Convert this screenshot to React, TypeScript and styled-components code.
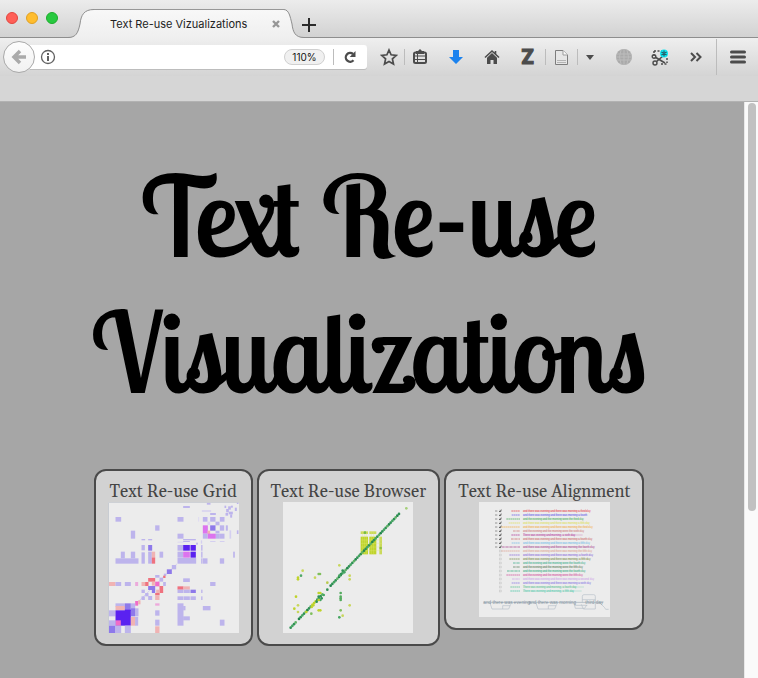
import React from "react";
import styled, { createGlobalStyle } from "styled-components";

const GlobalStyle = createGlobalStyle`
  * { box-sizing: border-box; }
  body { margin: 0; background: #a6a6a6; }
  button { border: 0; padding: 0; margin: 0; background: none; font: inherit; color: inherit; cursor: pointer; }
`;

const ui = `Inter, "Liberation Sans", sans-serif`;

const Window = styled.div`
  display: flex;
  flex-direction: column;
  min-height: 100vh;
  font-family: ${ui};
`;

const TabBar = styled.header`
  display: flex;
  align-items: flex-end;
  height: 38px;
  background: linear-gradient(#ececec, #d2d2d2);
  border-bottom: 1px solid #8e8e8e;
`;

const Lights = styled.div`
  display: flex;
  gap: 8px;
  width: 68px;
  padding: 0 0 13px 6px;
`;

const Light = styled.button<{ $fill: string; $edge: string }>`
  width: 12px;
  height: 12px;
  border-radius: 50%;
  background: ${(p) => p.$fill};
  border: 1px solid ${(p) => p.$edge};
`;

const Tab = styled.div`
  display: flex;
  height: 29px;
  margin-bottom: -1px;
  svg { display: block; }
`;

const TabBody = styled.div`
  display: flex;
  align-items: center;
  justify-content: space-between;
  width: 190px;
  padding: 0 3px 0 16px;
  font-size: 11px;
  color: #222;
  white-space: nowrap;
  background: linear-gradient(#f8f8f8, #efefef);
  border-top: 1px solid #979797;
`;

const NewTab = styled.button`
  width: 14px;
  height: 14px;
  margin: 0 0 5px -4px;
  z-index: 1;
  svg { display: block; }
`;

const Toolbar = styled.nav`
  display: flex;
  align-items: center;
  height: 38px;
  background: linear-gradient(#efefef, #d4d4d4);
`;

const Back = styled.button`
  display: grid;
  place-items: center;
  width: 32px;
  height: 32px;
  margin-left: 3px;
  border-radius: 50%;
  border: 1px solid #a9a9a9;
  background: linear-gradient(#fdfdfd, #f1f1f1);
  z-index: 1;
`;

const AddressBar = styled.div`
  display: flex;
  align-items: center;
  flex: 1;
  min-width: 0;
  height: 24px;
  margin-left: -5px;
  padding: 0 8px 0 10px;
  background: #fff;
  border-radius: 0 3px 3px 0;
  box-shadow: 0 1px 0 #bdbdbd;
`;

const Address = styled.input`
  flex: 1;
  min-width: 0;
  margin: 0 6px;
  border: 0;
  outline: 0;
  background: none;
  font: 12px ${ui};
`;

const Zoom = styled.button`
  width: 41px;
  height: 16px;
  border: 1px solid #d0d0d0;
  border-radius: 8px;
  background: #f0f0f0;
  font-size: 10px;
  line-height: 14px;
  color: #111;
`;

const Divider = styled.span<{ $tall?: boolean }>`
  flex: none;
  width: 1px;
  height: ${(p) => (p.$tall ? "36px" : "16px")};
  background: #bcbcbc;
`;

const AddressDivider = styled(Divider)`
  margin: 0 7px 0 8px;
`;

const ToolButton = styled.button<{ $width?: number; $gap?: number }>`
  display: grid;
  place-items: center;
  flex: none;
  width: ${(p) => p.$width ?? 36}px;
  height: 32px;
  margin-left: ${(p) => p.$gap ?? 0}px;
  color: #4c4c4c;
  svg { display: block; }
`;

const MenuDivider = styled(Divider)`
  margin-left: 2px;
`;

const ZMark = styled.span`
  font: 900 20px/20px Roboto, "Liberation Sans", sans-serif;
  -webkit-text-stroke: 1px #4c4c4c;
`;

const BookmarkStrip = styled.div`
  height: 26px;
  background: #d6d6d6;
  border-bottom: 1px solid #b2b2b2;
`;

const Viewport = styled.div`
  display: flex;
  flex: 1;
`;

const Page = styled.main`
  flex: 1;
  min-width: 0;
  padding: 46px 22px 32px 16px;
  background: #a6a6a6;
`;

const Title = styled.h1`
  margin: 0 0 49px;
  font: normal 108px/136px "Lobster Two", Lobster, "Liberation Serif", serif;
  -webkit-text-stroke: 2px #000;
  text-align: center;
  color: #000;
`;

const Cards = styled.div`
  display: flex;
  flex-wrap: wrap;
  align-items: flex-start;
  justify-content: center;
  gap: 4px;
`;

const Card = styled.a`
  display: flex;
  flex-direction: column;
  align-items: center;
  padding: 11px 12px;
  border: 2px solid #4a4a4a;
  border-radius: 12px;
  background: #d2d2d2;
  color: #444;
  text-decoration: none;
  font: 17px/20px Georgia, Gelasio, "Liberation Serif", serif;
  svg { display: block; background: #ececec; }
`;

const Scrollbar = styled.div`
  display: flex;
  flex-direction: column;
  width: 14px;
  padding: 1px 2px 0 3px;
  background: #fafafa;
  border-left: 1px solid #e8e8e8;
`;

const Thumb = styled.div`
  flex: 71;
  border-radius: 4px;
  background: #c1c1c1;
`;

const Track = styled.div`
  flex: 29;
`;

const TabEdge = ({ right }: { right?: boolean }) => (
  <svg width={right ? 22 : 26} height="29" viewBox={right ? "0 0 22 29" : "0 0 26 29"} aria-hidden="true">
    <defs>
      <linearGradient id="tabfill" x1="0" y1="0" x2="0" y2="1">
        <stop stopColor="#f8f8f8" />
        <stop offset="1" stopColor="#efefef" />
      </linearGradient>
    </defs>
    {right ? (
      <>
        <path d="M0 .5C5 1 6 7 8 15C9 23 11 28.500 20 28.500L22 29H0Z" fill="url(#tabfill)" />
        <path d="M0 .5C5 1 6 7 8 15C9 23 11 28.500 20 28.500H22" fill="none" stroke="#8e8e8e" />
      </>
    ) : (
      <>
        <path d="M0 29C8 28.500 10 24 12 15C13 6 16 .5 26 .5V29Z" fill="url(#tabfill)" />
        <path d="M0 28.500C8 28.500 10 24 12 15C13 6 16 .5 26 .5" fill="none" stroke="#8e8e8e" />
      </>
    )}
  </svg>
);

const L = "#bdb4ec", M = "#8e79ea", D = "#5a22f0", R = "#ef727f", P = "#f0b3b3", G = "#dc74ee", H = "#f06cc8";

type Cell = [number, number, number, number, string];
const gridCells: Cell[] = [
  [348, 113, 11, 6, L], [277, 123, 20, 6, L], [401, 122, 5, 7, L], [412, 124, 8, 10, L], [420, 122, 6, 6, L], [432, 128, 6, 10, L],
  [333, 136, 28, 4, "#d3cdef"], [406, 132, 8, 10, L], [404, 144, 8, 8, L], [414, 140, 12, 8, L], [418, 148, 6, 10, L], [358, 144, 17, 6, L], [438, 112, 5, 5, L],
  [74, 156, 17, 14, L], [260, 156, 18, 14, L], [336, 156, 14, 14, L], [358, 156, 16, 14, L], [387, 156, 14, 14, L], [322, 156, 3, 14, "#dedaf2"],
  [374, 170, 12, 11, L], [193, 181, 13, 16, L], [350, 170, 8, 10, "#dcd6f0"],
  [336, 181, 15, 25, G], [358, 181, 16, 16, M], [387, 181, 13, 16, L], [405, 181, 6, 16, L], [350, 197, 8, 10, P], [374, 197, 12, 8, L],
  [350, 206, 25, 15, G], [336, 206, 14, 15, L], [375, 206, 12, 15, L], [387, 206, 14, 15, L], [416, 196, 5, 25, "#d4cff0"], [438, 196, 5, 11, L], [260, 206, 18, 15, L],
  [120, 197, 13, 24, L], [152, 222, 11, 4, L], [172, 222, 12, 4, L], [277, 222, 38, 4, L], [260, 230, 18, 3, "#ddd8f1"], [277, 228, 20, 3, L], [358, 228, 16, 3, "#d4cff0"], [387, 228, 14, 3, "#d4cff0"],
  [316, 233, 5, 6, L], [330, 226, 4, 10, "#d4cff0"],
  [152, 240, 10, 16, L], [172, 240, 12, 17, M], [260, 240, 17, 17, L], [277, 240, 20, 17, D], [299, 240, 16, 17, D], [331, 240, 4, 17, L],
  [90, 260, 12, 20, L], [120, 260, 13, 20, L], [152, 262, 10, 34, L], [172, 260, 11, 36, L], [183, 260, 10, 20, P], [183, 278, 10, 18, R], [206, 260, 11, 18, L],
  [260, 260, 17, 18, L], [277, 260, 20, 18, G], [299, 260, 16, 18, D], [331, 260, 4, 18, L], [427, 260, 5, 18, L],
  [74, 280, 69, 16, L], [260, 279, 56, 17, L], [331, 280, 4, 16, L], [336, 280, 14, 16, L], [387, 280, 13, 16, L],
  [243, 300, 13, 13, L], [228, 313, 15, 14, M], [219, 326, 7, 7, L], [217, 332, 7, 7, R], [193, 330, 13, 8, L], [206, 338, 11, 12, L],
  [172, 339, 21, 11, R], [277, 340, 20, 11, L], [358, 351, 16, 12, L], [52, 351, 22, 12, P], [74, 351, 17, 12, L], [102, 351, 18, 12, L], [133, 351, 9, 12, "#ecaadb"],
  [152, 351, 11, 12, P], [163, 351, 10, 12, R], [193, 350, 13, 14, H], [183, 351, 9, 11, P], [217, 351, 8, 12, L],
  [172, 363, 21, 12, M], [183, 374, 10, 10, M], [206, 363, 11, 21, R], [196, 374, 10, 16, P], [260, 364, 18, 10, R], [278, 364, 19, 10, P],
  [152, 374, 10, 10, L], [163, 384, 10, 10, L], [193, 384, 13, 7, R], [193, 391, 13, 14, P], [172, 393, 12, 12, L], [152, 394, 10, 11, L],
  [260, 374, 17, 10, L], [278, 374, 19, 10, L], [299, 374, 16, 10, M], [331, 374, 4, 10, L], [260, 394, 17, 11, L], [278, 394, 19, 11, L], [299, 394, 16, 11, L], [331, 394, 4, 11, L],
  [133, 408, 9, 14, H], [142, 406, 7, 12, P], [193, 415, 13, 7, "#eda9dc"],
  [74, 415, 28, 10, L], [74, 423, 28, 13, P], [102, 415, 18, 20, M], [120, 415, 13, 20, L], [133, 430, 10, 24, L], [120, 430, 13, 24, M],
  [52, 436, 22, 18, L], [74, 436, 46, 46, D], [102, 434, 18, 4, D], [120, 456, 14, 26, P], [133, 456, 9, 26, L], [74, 466, 16, 16, H], [52, 466, 22, 16, L],
  [52, 482, 22, 22, M], [74, 482, 17, 22, L], [102, 482, 18, 22, L], [193, 436, 13, 16, L], [193, 464, 13, 18, L], [193, 484, 13, 20, P],
  [260, 415, 18, 67, L], [277, 423, 7, 13, L], [277, 454, 20, 12, L], [336, 423, 23, 13, L], [387, 464, 14, 18, L],
];

const GridChart = () => (
  <svg width="131" height="131" viewBox="52 111 392 393" role="img" aria-label="Text re-use grid">
    <path d="M136 416L258 297" stroke="#d5cff0" strokeWidth="3" />
    {gridCells.map(([x, y, w, h, c], i) => (
      <rect key={i} x={x} y={y} width={w} height={h} fill={c} />
    ))}
    <path d="M53 504V112H444" fill="none" stroke="#c8ccd2" strokeWidth="3" />
  </svg>
);

const greens = ["#2f9155", "#45a561", "#2f9155", "#5fb266", "#23864c"];
const lime = "#bfd32b";
const diagonal: [number, number][] = [];
for (let x = 122; x <= 450; x += 5) {
  if ((x > 138 && x < 147) || (x > 217 && x < 238)) continue;
  diagonal.push([x, 488 - (x - 122) * 1.05]);
}
const dots: [number, number, string][] = [
  [469, 130, "#a5cf7a"], [268, 301, "#c8d65c"], [158, 317, "#c8d65c"], [153, 332, "#4fa968"], [144, 338, lime], [144, 343, lime],
  [206, 327, "#7fbf5c"], [210, 327, "#7fbf5c"], [195, 338, "#c8d65c"], [232, 353, "#b7ca4c"], [299, 332, "#c8d65c"], [299, 343, "#c8d65c"],
  [278, 317, "#2f9155"], [283, 322, "#45a561"], [273, 327, "#2f9155"], [268, 332, "#45a561"], [232, 374, "#2f9155"], [221, 390, "#45a561"],
  [206, 384, lime], [211, 384, lime], [138, 395, lime], [206, 395, "#2f9155"], [215, 400, "#2f9155"], [211, 405, "#45a561"], [200, 410, "#2f9155"], [206, 405, lime],
  [272, 384, "#55ac60"], [272, 395, "#55ac60"], [272, 400, "#55ac60"], [272, 405, "#55ac60"], [272, 436, "#7fbf5c"], [299, 421, "#c8d65c"],
  [144, 421, "#c8d65c"], [133, 431, lime], [144, 441, "#c8d65c"], [206, 436, lime], [211, 436, lime], [184, 446, "#7fbf5c"], [268, 457, "#45a561"], [278, 452, "#c8d65c"],
  [190, 421, lime], [185, 426, lime], [169, 441, lime],
];

const BrowserChart = () => (
  <svg width="130" height="131" viewBox="99 111 390 393" role="img" aria-label="Text re-use browser">
    <g fill={lime}>
      <rect x="332" y="215" width="22" height="53" />
      <rect x="358" y="215" width="21" height="53" />
      <rect x="388" y="215" width="8" height="53" opacity=".75" />
      <rect x="332" y="199" width="22" height="8" opacity=".75" />
      <rect x="358" y="199" width="21" height="8" opacity=".75" />
    </g>
    <path d="M331 225H397M331 235H397M331 246H397M331 257H397M338 198V269M344 198V269M349 198V269M364 198V269M371 198V269" stroke="#e2e978" strokeWidth="1" />
    <circle cx="345" cy="203" r="4" fill="#74ba48" />
    <circle cx="392" cy="249" r="4" fill="#8fc245" />
    {diagonal.map(([x, y], i) => (
      <circle key={i} cx={x} cy={y} r="4" fill={x > 182 && x < 200 ? lime : greens[i % 5]} />
    ))}
    {dots.map(([x, y, c], i) => (
      <circle key={i} cx={x} cy={y} r="4" fill={c} />
    ))}
  </svg>
);

const A = "and there was evening and there was morning";
const B = "and the evening and the morning were";
const rows: [string, number, number, string][] = [
  ["#e5484f", 220, 447, `${A} a third day`], ["#6c5fe8", 221, 447, `${A} a fourth`], ["#4cae5c", 205, 426, `${B} the third day`],
  ["#dfe060", 212, 453, `${A} a fifth day`], ["#f2b04c", 190, 453, `${A} the third day`], ["#cf7e7e", 225, 426, `${B} the sixth day`],
  ["#b4409c", 220, 434, `There was evening and morning, a sixth day`], ["#cf6f6f", 219, 450, `${A} a fourth day`], ["#77bce8", 221, 444, `${A} a fifth day`],
  ["#aa4a92", 192, 458, `${A} the fourth day`], ["#dfa596", 190, 449, `${A} the fifth day`], ["#8e70dc", 214, 457, `${A}, a fourth day`],
  ["#7f8f50", 214, 450, `${A}, a fifth day`], ["#3fb08d", 225, 430, `${B} the fourth day`], ["#5d8060", 225, 423, `${B} the fifth day`],
  ["#3dad84", 207, 429, `${B} the fourth day`], ["#d4559e", 205, 423, `${B} the fifth day`], ["#d0a5e8", 222, 452, `${A} a second day`],
  ["#8b7ae5", 221, 446, `${A} a sixth day`], ["#5fc295", 217, 438, `There was evening and morning, a fourth day`], ["#4bc7a8", 217, 431, `There was evening and morning, a fifth day`],
];

const AlignmentChart = () => (
  <svg width="131" height="115" viewBox="123 111 393 345" role="img" aria-label="Text re-use alignment">
    {rows.map(([color, from, to, text], i) => {
      const y = 138 + i * 12;
      return (
        <g key={i}>
          {i < 10 && <path d={`M171 ${y}h7`} stroke="#aaa" strokeWidth="4" />}
          <rect x="184" y={y - 3} width="6" height="6" fill="#e0e0e0" stroke="#bbb" />
          {i < 10 && <path d={`M184 ${y}l2 3l4-7`} fill="none" stroke="#222" strokeWidth="2" />}
          <path d={`M${from} ${y}H246`} stroke={color} strokeWidth="5" strokeDasharray="6 1 4 1" opacity=".5" />
          <path d={`M255 ${y}H${to}`} stroke={color} strokeWidth="4" opacity=".2" />
          <text x="255" y={y + 3} fontSize="8" fontFamily="Liberation Sans" fill={color}>{text}</text>
        </g>
      );
    })}
    <g fill="none" stroke="#b6c0c8" strokeWidth="2">
      <path d="M136 412H496" strokeWidth="3" />
      <path d="M156 414L162 432H212L218 418M194 432V422H216M294 414L300 432H350L356 418M331 432V422H354M408 414L412 430H440L446 420M410 421H448M433 412V394Q433 389 438 389H467Q472 389 472 394V432H436L430 418M433 404H472M484 412L500 428L503 433H512" />
    </g>
    <g fontSize="14" fontFamily="Liberation Sans" fill="#8796a3">
      <text x="136" y="416">and there was evening</text>
      <text x="272" y="416">and there was morning</text>
      <text x="442" y="416">third day</text>
    </g>
  </svg>
);

const cards = [
  { name: "Text Re-use Grid", Chart: GridChart },
  { name: "Text Re-use Browser", Chart: BrowserChart },
  { name: "Text Re-use Alignment", Chart: AlignmentChart },
];

export default function App() {
  return (
    <Window>
      <GlobalStyle />
      <TabBar>
        <Lights>
          <Light aria-label="Close window" $fill="#ff5f57" $edge="#e2463f" />
          <Light aria-label="Minimize window" $fill="#ffbd2e" $edge="#e0a023" />
          <Light aria-label="Zoom window" $fill="#28c940" $edge="#1dad2c" />
        </Lights>
        <Tab>
          <TabEdge />
          <TabBody>
            <span>Text Re-use Vizualizations</span>
            <button aria-label="Close tab">
              <svg width="10" height="10" viewBox="0 0 10 10"><path d="M2 2l6 6M8 2l-6 6" stroke="#969696" strokeWidth="2.400" /></svg>
            </button>
          </TabBody>
          <TabEdge right />
        </Tab>
        <NewTab aria-label="New tab">
          <svg width="14" height="14" viewBox="0 0 14 14"><path d="M7 0v14M0 7h14" stroke="#2b2b2b" strokeWidth="2" /></svg>
        </NewTab>
      </TabBar>
      <Toolbar>
        <Back aria-label="Back">
          <svg width="16" height="16" viewBox="0 0 16 16"><path d="M15 8H3M9 2L3 8l6 6" fill="none" stroke="#aaa" strokeWidth="3.500" /></svg>
        </Back>
        <AddressBar>
          <svg width="16" height="16" viewBox="0 0 16 16" fill="none" stroke="#606060" aria-hidden="true">
            <circle cx="8" cy="8" r="6.500" strokeWidth="1.300" />
            <path d="M8 7v5M8 4v2" strokeWidth="2" />
          </svg>
          <Address type="text" aria-label="Address" />
          <Zoom>110%</Zoom>
          <AddressDivider />
          <ToolButton $width={18} aria-label="Reload">
            <svg width="14" height="14" viewBox="0 0 14 14"><path d="M10.500 10.300A4.400 4.400 0 1 1 10 4" fill="none" stroke="#4c4c4c" strokeWidth="2.300" /><path d="M12.500 1v6H6.700z" fill="#4c4c4c" /></svg>
          </ToolButton>
        </AddressBar>
        <ToolButton $width={30} $gap={7} aria-label="Bookmark this page">
          <svg width="18" height="18" viewBox="0 0 18 18"><path d="M9 2l2.100 4.800 5.200.6-3.900 3.500 1.100 5.100L9 13.400 4.500 16l1.100-5.100L1.700 7.400l5.200-.6z" fill="none" stroke="#4c4c4c" strokeWidth="1.700" /></svg>
        </ToolButton>
        <Divider />
        <ToolButton $width={30} aria-label="Show bookmarks">
          <svg width="16" height="16" viewBox="0 0 16 16"><path d="M5 3l3-3 3 3z" fill="#4c4c4c" /><rect x="2" y="3.500" width="12" height="10.500" rx="1.500" fill="none" stroke="#4c4c4c" strokeWidth="2" /><path d="M3 7h10M3 10.500h10M5.500 4v9" stroke="#4c4c4c" /><path d="M4 3.500h8" stroke="#4c4c4c" strokeWidth="3" /></svg>
        </ToolButton>
        <ToolButton $gap={3} aria-label="Downloads">
          <svg width="16" height="16" viewBox="0 0 16 16"><path d="M5 1h6v7h4L8 15 1 8h4z" fill="#1b82ee" /></svg>
        </ToolButton>
        <ToolButton aria-label="Home">
          <svg width="16" height="16" viewBox="0 0 16 16"><path d="M1 8.500l7-6.500 7 6.500M11.500 2v3" fill="none" stroke="#4c4c4c" strokeWidth="1.600" /><path d="M3 8.700l5-4.600 5 4.600V15H9.500v-4h-3v4H3z" fill="#4c4c4c" /></svg>
        </ToolButton>
        <ToolButton $width={35} aria-label="Save to Zotero"><ZMark>Z</ZMark></ToolButton>
        <Divider />
        <ToolButton $width={31} aria-label="Save web page">
          <svg width="17" height="17" viewBox="0 0 17 17">
            <path d="M2.500 1.500H10L14.500 6V15.500H2.500z" fill="#e6e6e6" stroke="#7d7d7d" strokeLinejoin="round" />
            <path d="M10 1.500V6H14.500" fill="#fafafa" stroke="#9c9c9c" />
            <path d="M4 11.500h9M4 13.500h9" stroke="#b4b4b4" />
          </svg>
        </ToolButton>
        <Divider />
        <ToolButton $width={24} aria-label="More save options">
          <svg width="8" height="5" viewBox="0 0 8 5"><path d="M0 0h8L4 5z" fill="#4c4c4c" /></svg>
        </ToolButton>
        <ToolButton $gap={4} aria-label="Web tools">
          <svg width="16" height="16" viewBox="0 0 16 16"><circle cx="8" cy="8" r="8" fill="#aaa" /><path d="M1 5h14M0 8h16M1 11h14M8 0v16M5 1Q2 8 5 15M11 1q3 7 0 14" fill="none" stroke="#bcbcbc" /></svg>
        </ToolButton>
        <ToolButton aria-label="Clip page">
          <svg width="18" height="17" viewBox="0 0 18 17">
            <path d="M3 2h8M3 2v5M16 9v5M10 15h6" fill="none" stroke="#4c4c4c" strokeWidth="1.500" strokeDasharray="2 1.500" />
            <path d="M4 8l10 6M5 13l7-6" stroke="#4c4c4c" strokeWidth="1.600" />
            <g fill="none" stroke="#4c4c4c" strokeWidth="1.400"><circle cx="3" cy="7.500" r="1.800" /><circle cx="4" cy="14" r="2" /></g>
            <circle cx="13" cy="4.500" r="4" fill="#0ee7f2" />
            <path d="M13 1.500v6M10.400 3l5.200 3M15.600 3l-5.200 3" stroke="#26606a" strokeWidth="1.200" />
          </svg>
        </ToolButton>
        <ToolButton aria-label="More tools">
          <svg width="12" height="10" viewBox="0 0 12 10"><path d="M1 1l4 4-4 4M6.500 1l4 4-4 4" fill="none" stroke="#4c4c4c" strokeWidth="2" /></svg>
        </ToolButton>
        <MenuDivider $tall />
        <ToolButton $width={41} aria-label="Open menu">
          <svg width="16" height="14" viewBox="0 0 16 14"><path d="M1.500 2h13M1.500 7h13M1.500 12h13" stroke="#4c4c4c" strokeWidth="3" strokeLinecap="round" /></svg>
        </ToolButton>
      </Toolbar>
      <BookmarkStrip />
      <Viewport>
        <Page>
          <Title>Text Re-use Visualizations</Title>
          <Cards>
            {cards.map(({ name, Chart }) => (
              <Card key={name} href="#">
                <span>{name}</span>
                <Chart />
              </Card>
            ))}
          </Cards>
        </Page>
        <Scrollbar aria-hidden="true">
          <Thumb />
          <Track />
        </Scrollbar>
      </Viewport>
    </Window>
  );
}
